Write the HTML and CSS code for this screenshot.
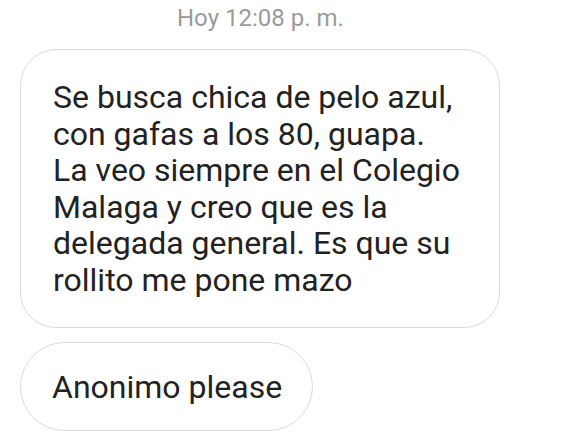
FILE: index.html
```html
<!DOCTYPE html>
<html lang="es">
<head>
<meta charset="utf-8">
<link rel="stylesheet" href="styles.css">
</head>
<body>
<div class="chat">
  <div class="time">Hoy 12:08 p. m.</div>
  <div class="bubble bubble-long">Se busca chica de pelo azul,<br>con gafas a los 80, guapa.<br>La veo siempre en el Colegio<br>Malaga y creo que es la<br>delegada general. Es que su<br>rollito me pone mazo</div>
  <div class="bubble bubble-short">Anonimo please</div>
</div>
</body>
</html>
```
FILE: styles.css
```css
html, body {
  margin: 0;
  padding: 0;
  background: #ffffff;
}
body {
  font-family: Roboto, "Noto Sans", sans-serif;
  color: #222222;
}
.chat {
  display: flex;
  flex-direction: column;
  align-items: flex-start;
  padding: 0 0 0 20px;
}
.time {
  align-self: flex-start;
  margin-left: 157px;
  font-size: 24px;
  line-height: 26px;
  height: 26px;
  padding-top: 5px;
  color: #9a9a9a;
  margin-bottom: 18px;
}
.bubble {
  box-sizing: border-box;
  border: 1.5px solid #dadada;
  background: #ffffff;
  font-size: 32px;
  line-height: 36.5px;
}
.bubble-long {
  width: 480px;
  height: 279px;
  border-radius: 36px;
  padding: 29px 20px 0 32px;
}
.bubble-short {
  margin-top: 14px;
  height: 89px;
  border-radius: 45px;
  padding: 26px 30px 0 31px;
}
```
